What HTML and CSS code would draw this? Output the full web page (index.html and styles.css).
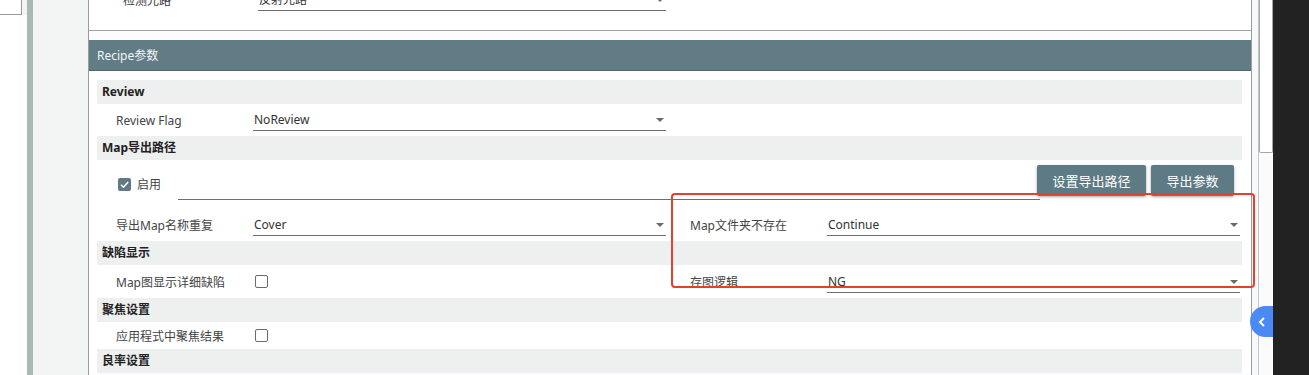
FILE: index.html
```html
<!DOCTYPE html>
<html lang="zh-CN">
<head>
  <meta charset="UTF-8" />
  <title>Recipe参数</title>
  <link rel="stylesheet" href="styles.css">
</head>
<body>
  <div class="screen">
    <div class="side">
      <div class="side-box"></div>
      <div class="side-strip"></div>
    </div>

    <div class="main">
      <div class="top-card">
        <div class="top-row">
          <span class="top-label">检测光路</span>
          <div class="select"><span>反射光路</span><i class="caret"></i></div>
        </div>
      </div>

      <div class="card">
        <div class="card-head">Recipe参数</div>
        <div class="card-body">
          <div class="group-title">Review</div>
          <div class="row">
            <span class="label">Review Flag</span>
            <div class="select"><span>NoReview</span><i class="caret"></i></div>
          </div>

          <div class="group-title">Map导出路径</div>
          <div class="row-path">
            <span class="check checked">
              <svg width="13" height="13" viewBox="0 0 13 13"><path d="M3 6.8l2.4 2.4L10.2 4" fill="none" stroke="#fff" stroke-width="1.6"/></svg>
            </span>
            <span class="check-text">启用</span>
            <div class="path-input"></div>
            <button class="btn">设置导出路径</button>
            <button class="btn">导出参数</button>
          </div>
          <div class="row row-mid">
            <span class="label">导出Map名称重复</span>
            <div class="select"><span>Cover</span><i class="caret"></i></div>
            <span class="label">Map文件夹不存在</span>
            <div class="select"><span>Continue</span><i class="caret"></i></div>
          </div>

          <div class="group-title">缺陷显示</div>
          <div class="row row-mid">
            <span class="label">Map图显示详细缺陷</span>
            <div class="cell"><span class="check"></span></div>
            <span class="label">存图逻辑</span>
            <div class="select"><span>NG</span><i class="caret"></i></div>
          </div>

          <div class="group-title">聚焦设置</div>
          <div class="row row-short">
            <span class="label">应用程式中聚焦结果</span>
            <div class="cell"><span class="check"></span></div>
          </div>

          <div class="group-title">良率设置</div>
        </div>
      </div>
    </div>

    <div class="gutter">
      <div class="scroll-track"><div class="scroll-thumb"></div></div>
    </div>
    <div class="dark"></div>
  </div>

  <div class="mark"></div>
  <div class="side-tab">
    <svg width="10" height="12" viewBox="0 0 10 12"><path d="M7 2L3 6l4 4" fill="none" stroke="#fff" stroke-width="2"/></svg>
  </div>
</body>
</html>
```

FILE: styles.css
```css
body {
  margin: 0;
  font-family: "Noto Sans", "Noto Sans CJK SC", sans-serif;
  font-size: 12px;
  color: #3a3a3a;
  background: #fff;
  overflow: hidden;
}
.screen {
  display: flex;
  height: 375px;
}
.side {
  width: 88px;
  flex: none;
  position: relative;
  background: #f3f5f5;
  display: flex;
}
.side-box {
  width: 22px;
  height: 15px;
  border-right: 1px solid #9a9a9a;
  border-bottom: 1px solid #9a9a9a;
  background: #fff;
  box-sizing: border-box;
}
.side-strip {
  width: 6px;
  margin-left: 5px;
  background: #a9b9b4;
}
.side::before {
  content: "";
  position: absolute;
  left: 0;
  top: 15px;
  width: 27px;
  bottom: 0;
  background: #fff;
}
.main {
  width: 1164px;
  flex: none;
  border-left: 1px solid #9c9c9c;
  border-right: 1px solid #9c9c9c;
  box-sizing: border-box;
  background: #fcfbfe;
}
.top-card {
  display: flow-root;
  background: #fff;
  height: 31px;
  box-sizing: border-box;
  border-bottom: 1px solid #a0a0a0;
}
.top-row {
  display: flex;
  align-items: center;
  height: 24px;
  margin-top: -12px;
}
.top-label {
  width: 135px;
  padding-left: 34px;
}
.top-row .select {
  width: 408px;
}
.card {
  margin-top: 9px;
  background: #fff;
}
.card-head {
  height: 31px;
  line-height: 31px;
  background: #617c85;
  border-bottom: 1px solid #4f666e;
  color: #f2f6f7;
  padding-left: 8px;
  box-sizing: border-box;
}
.card-body {
  padding: 9px 9px 0 8px;
}
.group-title {
  height: 24px;
  line-height: 24px;
  background: #eeefef;
  font-weight: bold;
  color: #222;
  padding-left: 5px;
}
.row {
  display: grid;
  grid-template-columns: 137px 413px 161px 413px;
  align-items: center;
  height: 32px;
  padding-left: 19px;
}
.row > .label:nth-of-type(2) {
  margin-left: 24px;
}
.row-mid {
  height: 33px;
}
.row-short {
  height: 27px;
}
.label {
  color: #444;
  white-space: nowrap;
}
.select {
  position: relative;
  height: 22px;
  line-height: 21px;
  border-bottom: 1px solid #6e6e6e;
  box-sizing: border-box;
  color: #333;
}
.select span {
  padding-left: 1px;
}
.caret {
  position: absolute;
  right: 2px;
  top: 9px;
  width: 0;
  height: 0;
  border-left: 4px solid transparent;
  border-right: 4px solid transparent;
  border-top: 4px solid #6a6a6a;
}
.cell {
  display: flex;
  align-items: center;
}
.check {
  display: inline-block;
  width: 13px;
  height: 13px;
  border: 1.5px solid #6a6a6a;
  border-radius: 2px;
  box-sizing: border-box;
  margin-left: 2px;
  background: #fff;
}
.check.checked {
  border: none;
  background: #5f7a85;
  margin-left: 0;
}
.check svg {
  display: block;
}
.row-path {
  display: flex;
  align-items: center;
  height: 48px;
  padding-left: 21px;
}
.check-text {
  margin-left: 6px;
  color: #444;
}
.path-input {
  width: 862px;
  height: 22px;
  margin-left: 17px;
  margin-top: 8px;
  border-bottom: 1px solid #6e6e6e;
}
.btn {
  height: 31px;
  border: none;
  border-radius: 2px;
  background: #5e7a84;
  color: #fff;
  font-family: "Noto Sans CJK SC", sans-serif;
  font-size: 13px;
  box-shadow: 0 1px 3px rgba(0, 0, 0, 0.35);
  margin-top: -7px;
  padding: 0;
}
.btn:first-of-type {
  width: 109px;
  margin-left: -3px;
}
.btn + .btn {
  width: 83px;
  margin-left: 5px;
}
.gutter {
  width: 21px;
  flex: none;
  background: #f6f8fa;
  display: flex;
  justify-content: flex-end;
}
.scroll-track {
  width: 15px;
  border-left: 1px solid #c4c4c4;
  box-sizing: border-box;
  background: #fbfbfb;
}
.scroll-thumb {
  height: 153px;
  border: 1px solid #a6a6a6;
  border-top: none;
  border-radius: 0 0 2px 2px;
  background: #fff;
  box-sizing: border-box;
}
.dark {
  flex: 1;
  background: #222;
}
.mark {
  position: absolute;
  left: 671px;
  top: 193px;
  width: 584px;
  height: 95px;
  border: 2.5px solid #e5402b;
  border-radius: 4px;
  box-sizing: border-box;
}
.side-tab {
  position: absolute;
  left: 1250px;
  top: 306px;
  width: 23px;
  height: 31px;
  border-radius: 16px 0 0 16px;
  background: #4a8af4;
  display: flex;
  align-items: center;
  justify-content: center;
}
```
